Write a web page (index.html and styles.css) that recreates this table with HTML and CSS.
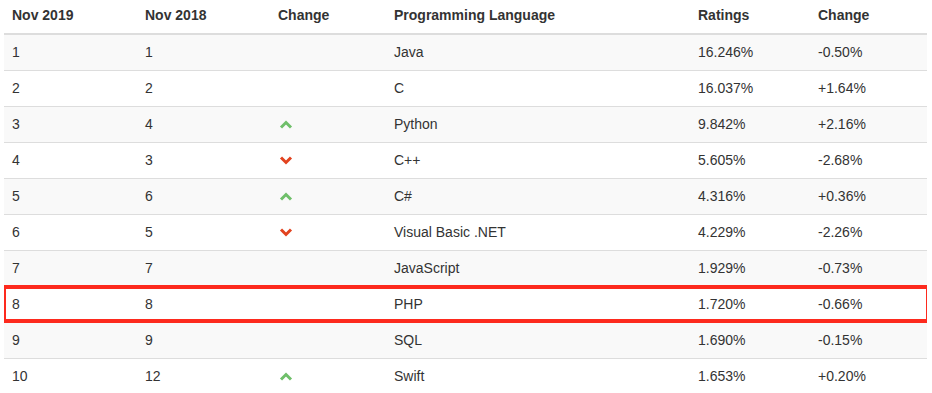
FILE: index.html
```html
<!DOCTYPE html>
<html lang="en">
<head>
    <meta charset="UTF-8">
    <title>TIOBE Index</title>
    <link rel="stylesheet" href="styles.css">
</head>
<body>
    <div class="table-wrap">
        <table class="table">
            <thead>
                <tr>
                    <th class="c1">Nov 2019</th>
                    <th class="c2">Nov 2018</th>
                    <th class="c3">Change</th>
                    <th class="c4">Programming Language</th>
                    <th class="c5">Ratings</th>
                    <th class="c6">Change</th>
                </tr>
            </thead>
            <tbody>
                <tr><td>1</td><td>1</td><td></td><td>Java</td><td>16.246%</td><td>-0.50%</td></tr>
                <tr><td>2</td><td>2</td><td></td><td>C</td><td>16.037%</td><td>+1.64%</td></tr>
                <tr><td>3</td><td>4</td><td><svg class="arrow up" width="14" height="9" viewBox="0 0 14 9"><polyline points="2,7.5 7,2.5 12,7.5"/></svg></td><td>Python</td><td>9.842%</td><td>+2.16%</td></tr>
                <tr><td>4</td><td>3</td><td><svg class="arrow down" width="14" height="9" viewBox="0 0 14 9"><polyline points="2,1.5 7,6.5 12,1.5"/></svg></td><td>C++</td><td>5.605%</td><td>-2.68%</td></tr>
                <tr><td>5</td><td>6</td><td><svg class="arrow up" width="14" height="9" viewBox="0 0 14 9"><polyline points="2,7.5 7,2.5 12,7.5"/></svg></td><td>C#</td><td>4.316%</td><td>+0.36%</td></tr>
                <tr><td>6</td><td>5</td><td><svg class="arrow down" width="14" height="9" viewBox="0 0 14 9"><polyline points="2,1.5 7,6.5 12,1.5"/></svg></td><td>Visual Basic .NET</td><td>4.229%</td><td>-2.26%</td></tr>
                <tr><td>7</td><td>7</td><td></td><td>JavaScript</td><td>1.929%</td><td>-0.73%</td></tr>
                <tr><td>8</td><td>8</td><td></td><td>PHP</td><td>1.720%</td><td>-0.66%</td></tr>
                <tr><td>9</td><td>9</td><td></td><td>SQL</td><td>1.690%</td><td>-0.15%</td></tr>
                <tr><td>10</td><td>12</td><td><svg class="arrow up" width="14" height="9" viewBox="0 0 14 9"><polyline points="2,7.5 7,2.5 12,7.5"/></svg></td><td>Swift</td><td>1.653%</td><td>+0.20%</td></tr>
            </tbody>
        </table>
        <!-- red box drawn over the PHP row -->
        <div class="highlight"></div>
    </div>
</body>
</html>
```

FILE: styles.css
```css
body {
    font-family: "Liberation Sans", Arial, sans-serif;
    font-size: 14px;
    color: #333;
    background-color: #fff;
    margin: 0 5px 0 4px;
}
.table-wrap {
    position: relative;
}
.table {
    width: 923px;
    border-collapse: collapse;
    border-spacing: 0;
    table-layout: fixed;
}
.table th {
    text-align: left;
    font-weight: bold;
    line-height: 19px;
    padding: 6px 8px 8px 8px;
    border-bottom: 2px solid #ddd;
}
.table td {
    line-height: 19px;
    padding: 8px;
    border-top: 1px solid #ddd;
}
.table tbody tr:nth-child(odd) {
    background-color: #f9f9f9;
}
.c1 { width: 117px; }
.c2 { width: 117px; }
.c3 { width: 100px; }
.c4 { width: 288px; }
.c5 { width: 104px; }
.c6 { width: 101px; }
.arrow {
    display: block;
    margin-left: 1px;
    fill: none;
    stroke-width: 3;
}
.up {
    stroke: #6fbf6a;
}
.down {
    stroke: #e2431f;
}
.highlight {
    position: absolute;
    left: -2px;
    top: 285px;
    width: 928px;
    height: 38px;
    box-sizing: border-box;
    border: 4px solid #fd2a1e;
    pointer-events: none;
}
```
